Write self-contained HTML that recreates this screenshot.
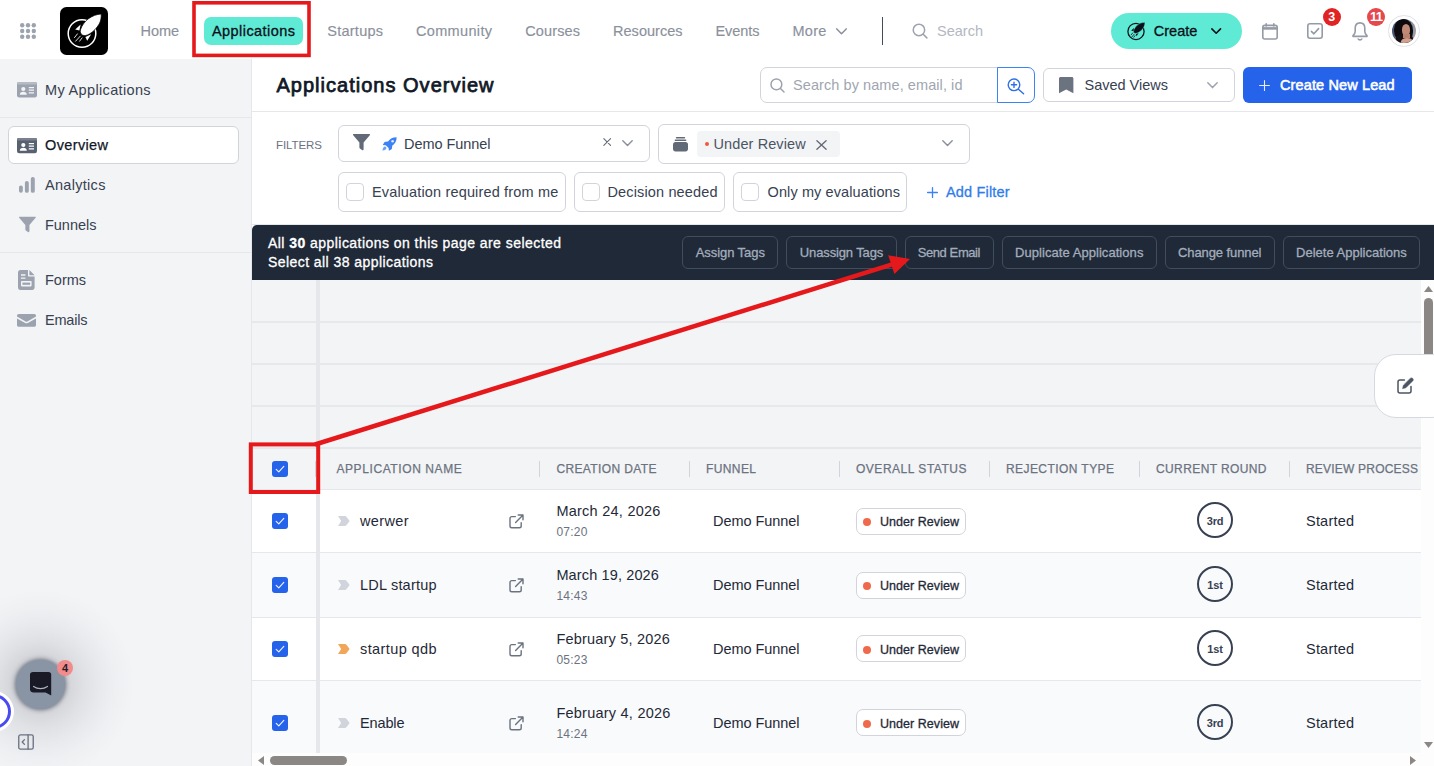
<!DOCTYPE html>
<html lang="en">
<head>
<meta charset="utf-8">
<title>Applications Overview</title>
<style>
*{box-sizing:border-box;margin:0;padding:0}
html,body{width:1434px;height:766px;overflow:hidden;background:#fff}
body{position:relative;font-family:"Liberation Sans",Arial,sans-serif;font-size:14px;color:#1f2937}
.a{position:absolute}
.t{position:absolute;white-space:nowrap;line-height:20px;height:20px}
svg{position:absolute;overflow:visible}
/* header */
#hdr{position:absolute;left:0;top:0;width:1434px;height:59px;background:#fff}
.nav{color:#8b919c;font-size:14.5px;-webkit-text-stroke:.15px #8b919c}
/* sidebar */
#side{position:absolute;left:0;top:59px;width:252px;height:707px;background:#f3f4f6;border-right:1px solid #e5e7eb}
.sb{color:#374151;font-size:14.5px}
/* main */
#main{position:absolute;left:252px;top:59px;width:1182px;height:707px;background:#fff}
.box{position:absolute;border:1px solid #d1d5db;border-radius:6px;background:#fff}
.cb{position:absolute;width:18px;height:18px;border:1px solid #d1d5db;border-radius:4px;background:#fff}
.ft{color:#374151;font-size:14.5px}
/* dark bar */
#bar{position:absolute;left:252px;top:225px;width:1182px;height:55px;background:#1f2937;border-top-left-radius:5px}
.bb{position:absolute;height:33px;border:1px solid #414c5c;border-radius:6px}
.bt{color:#a3adbc;font-size:13px;-webkit-text-stroke:.3px #a3adbc}
/* table */
#tbl{position:absolute;left:252px;top:280px;width:1169px;height:472px;background:#f3f4f6;overflow:hidden}
.hl{position:absolute;left:0;width:1169px;height:2px;background:#e8e9ed}
.th{color:#6b7280;font-size:12px;-webkit-text-stroke:.25px #6b7280}
.sep{position:absolute;top:181px;width:1px;height:16px;background:#d1d5db}
.row{position:absolute;left:0;width:1169px}
.ck{position:absolute;left:20px;width:16px;height:16px;border-radius:3px;background:#2563eb}
.nm{color:#1f2937;font-size:14.5px}
.tm{color:#6b7280;font-size:12px}
.st{position:absolute;left:604px;width:110px;height:27px;border:1px solid #d1d5db;border-radius:7px;background:#fff}
.dot{position:absolute;left:7px;top:9px;width:8px;height:8px;border-radius:50%;background:#ee6a4b}
.rd{position:absolute;left:945px;width:36px;height:36px;border:2px solid #374151;border-radius:50%}
</style>
</head>
<body>
<div id="hdr"></div>
<div id="side"></div>
<div id="main"></div>
<div id="bar"></div>
<div id="tbl"></div>
<svg style="left:20px;top:23px" width="16" height="16" viewBox="0 0 16 16" fill="#9ca3af"><rect x="0" y="0" width="4.4" height="4.4" rx="2.2"/><rect x="5.8" y="0" width="4.4" height="4.4" rx="2.2"/><rect x="11.6" y="0" width="4.4" height="4.4" rx="2.2"/><rect x="0" y="5.8" width="4.4" height="4.4" rx="2.2"/><rect x="5.8" y="5.8" width="4.4" height="4.4" rx="2.2"/><rect x="11.6" y="5.8" width="4.4" height="4.4" rx="2.2"/><rect x="0" y="11.6" width="4.4" height="4.4" rx="2.2"/><rect x="5.8" y="11.6" width="4.4" height="4.4" rx="2.2"/><rect x="11.6" y="11.6" width="4.4" height="4.4" rx="2.2"/></svg>
<div class="a" style="left:60px;top:7px;width:48px;height:48px;border-radius:6.5px;background:#000"></div>
<svg style="left:60px;top:7px" width="48" height="48" viewBox="0 0 48 48"><circle cx="22" cy="26.5" r="13.8" fill="none" stroke="#fff" stroke-width="1.5"/><path d="M41.2 7 C37 7.2 32.4 8.8 28 12 C24.6 14.8 21.8 18.6 20.5 22.7 C19.8 25.2 20.8 27.2 22.7 28.2 C24.4 29.1 26.8 28.4 29.4 27 C33 25 36.8 21.2 39.2 17 C40.8 14 41.4 10.6 41.2 7 Z" fill="#fff" stroke="#000" stroke-width=".7"/><path d="M15.2 22.4 L20.6 17.6 L19.4 23.6 Z" fill="#fff"/><path d="M25.4 30 L31.2 27.2 L27.2 33.8 Z" fill="#fff"/><path d="M17.4 26.9 L14.5 30.6 M20.3 29.1 L15.6 34.2 M22.1 30.9 L19.6 34.2" stroke="#fff" stroke-width="1" stroke-linecap="round" opacity=".85"/></svg>
<span class="t nav" style="letter-spacing:-0.062px;left:140.5px;top:21px">Home</span>
<div class="a" style="left:204px;top:17px;width:99px;height:28px;border-radius:7px;background:#5eead4"></div>
<span class="t" style="letter-spacing:0.438px;left:212px;top:21px;font-size:14.5px;color:#0b0f19;-webkit-text-stroke:.3px #0b0f19">Applications</span>
<span class="t nav" style="letter-spacing:0.243px;left:327.3px;top:21px">Startups</span>
<span class="t nav" style="letter-spacing:0.334px;left:416px;top:21px">Community</span>
<span class="t nav" style="letter-spacing:0.133px;left:525.2px;top:21px">Courses</span>
<span class="t nav" style="letter-spacing:0.036px;left:613px;top:21px">Resources</span>
<span class="t nav" style="letter-spacing:-0.049px;left:715.5px;top:21px">Events</span>
<span class="t nav" style="letter-spacing:0.284px;left:792.5px;top:21px">More</span>
<svg style="left:836px;top:27.5px" width="11" height="7" viewBox="0 0 11 7" fill="none" stroke="#8b919c" stroke-width="1.5" stroke-linecap="round" stroke-linejoin="round"><path d="M.8 .9 L5.5 5.7 L10.2 .9"/></svg>
<div class="a" style="left:882px;top:17px;width:1px;height:28px;background:#414c5d"></div>
<svg style="left:912px;top:23px" width="16.2" height="16.2" viewBox="0 0 17 17" fill="none" stroke="#9ca3af" stroke-width="1.6" stroke-linecap="round"><circle cx="7.3" cy="7.3" r="6"/><path d="M11.8 11.8 L15.6 15.6"/></svg>
<span class="t" style="letter-spacing:0.009px;left:937px;top:21px;font-size:14.5px;color:#b3b8c1">Search</span>
<!-- create -->
<div class="a" style="left:1111px;top:13px;width:131px;height:36px;border-radius:18px;background:#5eead4"></div>
<svg style="left:1126px;top:21px" width="20" height="20" viewBox="0 0 20 20"><circle cx="10" cy="10.4" r="8.1" fill="none" stroke="#0b0f19" stroke-width="1.25"/><path d="M19 1.3 C16 1.3 13 2.4 10.8 4.6 C9.2 6.2 7.9 8.2 7.5 10 C7.2 11.4 8.2 12.4 9.5 12.5 C11.2 12.4 13.6 11.2 15.5 9.3 C17.7 7.1 19 4.4 19 1.3 Z" fill="#0b0f19" stroke="#5eead4" stroke-width=".5"/><path d="M5.2 9.6 L8 7 L7.4 10.3 Z" fill="#0b0f19"/><path d="M9.8 13.3 L12.6 12 L10.6 15.2 Z" fill="#0b0f19"/><path d="M6.6 12 L5.2 13.8 M8 13.4 L5.8 16 M9 14.6 L7.8 16.2" stroke="#0b0f19" stroke-width=".8" stroke-linecap="round"/></svg>
<span class="t" style="letter-spacing:0.034px;left:1153.7px;top:21px;font-size:14.5px;color:#0b0f19;-webkit-text-stroke:.3px #0b0f19">Create</span>
<svg style="left:1211px;top:28px" width="10.4" height="6.6" viewBox="0 0 11 7" fill="none" stroke="#0b0f19" stroke-width="1.7" stroke-linecap="round" stroke-linejoin="round"><path d="M.9 .9 L5.5 5.6 L10.1 .9"/></svg>
<!-- calendar -->
<svg style="left:1262px;top:22.5px" width="16" height="17" viewBox="0 0 16 17" fill="none" stroke="#959ba6" stroke-width="1.6" stroke-linejoin="round"><rect x=".8" y="2.4" width="14.4" height="13.6" rx="2"/><path d="M.8 5.4 H15.2" stroke-width="2.6"/><path d="M4.2 .8 V3 M11.8 .8 V3" stroke-linecap="round"/></svg>
<!-- check square -->
<svg style="left:1307px;top:23px" width="16" height="16" viewBox="0 0 16 16" fill="none" stroke="#959ba6" stroke-width="1.6" stroke-linejoin="round" stroke-linecap="round"><rect x=".8" y=".8" width="14.4" height="14.4" rx="2.2"/><path d="M4.4 8.4 L6.9 10.8 L11.6 5.6"/></svg>
<div class="a" style="left:1322.5px;top:7.5px;width:18.5px;height:18.5px;border-radius:50%;background:#e02424"></div>
<span class="t" style="left:1322.5px;top:6.5px;width:18.5px;text-align:center;color:#fff;font-size:12.5px;font-weight:bold">3</span>
<!-- bell -->
<svg style="left:1352px;top:22px" width="16" height="19" viewBox="0 0 16 19" fill="none" stroke="#959ba6" stroke-width="1.6" stroke-linejoin="round" stroke-linecap="round"><path d="M8 .9 C4.8 .9 3.2 3.2 3.2 6.2 V9.4 C3.2 11.2 2.2 12.4 1 13.6 V14.4 H15 V13.6 C13.8 12.4 12.8 11.2 12.8 9.4 V6.2 C12.8 3.2 11.2 .9 8 .9 Z"/><path d="M6.2 17 C6.8 18.2 9.2 18.2 9.8 17"/></svg>
<div class="a" style="left:1367px;top:7.5px;width:18px;height:18.5px;border-radius:50%;background:#e5484d"></div>
<div class="a" style="left:1367px;top:7.5px;width:18px;height:13.3px;overflow:hidden"><span class="t" style="left:0;top:-.4px;width:18px;text-align:center;color:#fff;font-size:13px;font-weight:bold;letter-spacing:-.9px">11</span></div>
<!-- avatar -->
<div class="a" style="left:1388.3px;top:15.2px;width:31.4px;height:31.4px;border-radius:50%;background:#fff;border:1px solid #e0e2e6"></div>
<div class="a" style="left:1391.8px;top:18.7px;width:24.4px;height:24.4px;border-radius:50%;overflow:hidden;background:linear-gradient(100deg,#3f4f6e 0%,#56627c 30%,#8b8f99 75%,#a9abb0 100%)">
<div class="a" style="left:2.5px;top:0;width:19px;height:23px;border-radius:46% 50% 44% 50%;background:#0d0b0d"></div>
<div class="a" style="left:4px;top:15px;width:17px;height:11px;border-radius:40%;background:#141013"></div>
<div class="a" style="left:10px;top:5.5px;width:8.4px;height:11.4px;border-radius:48%;background:#c08a76"></div>
<div class="a" style="left:11.5px;top:15.5px;width:6.5px;height:4px;background:#b98370"></div>
<div class="a" style="left:9px;top:19px;width:12px;height:7px;border-radius:50% 50% 0 0;background:#d2a08c"></div>
</div>

<!-- sidebar: page coords -->
<svg style="left:17px;top:82px" width="20" height="16" viewBox="0 0 20 16"><rect x="0" y="0" width="20" height="15.4" rx="2.2" fill="#9ca3af"/><rect x="0" y="0" width="20" height="2.6" rx="1.3" fill="#b6bbc4"/><circle cx="6.3" cy="7" r="2.1" fill="#f3f4f6"/><path d="M2.8 12.8 C2.8 10.4 4.4 9.7 6.3 9.7 C8.2 9.7 9.8 10.4 9.8 12.8 Z" fill="#f3f4f6"/><path d="M11.8 5.6 H17 M11.8 8.2 H17 M11.8 10.8 H17" stroke="#f3f4f6" stroke-width="1.2"/></svg>
<span class="t sb" style="letter-spacing:0.346px;left:45px;top:80px">My Applications</span>
<div class="a" style="left:0;top:117px;width:251px;height:1px;background:#e5e7eb"></div>
<div class="box" style="left:8px;top:126px;width:231px;height:38px"></div>
<svg style="left:17px;top:137.5px" width="20" height="16" viewBox="0 0 20 16"><rect x="0" y="0" width="20" height="15.2" rx="2.2" fill="#596170"/><rect x="0" y="0" width="20" height="2.4" rx="1.2" fill="#7a818e"/><circle cx="6.3" cy="7" r="2.1" fill="#fff"/><path d="M2.8 12.8 C2.8 10.4 4.4 9.7 6.3 9.7 C8.2 9.7 9.8 10.4 9.8 12.8 Z" fill="#fff"/><path d="M11.8 5.6 H17 M11.8 8.2 H17 M11.8 10.8 H17" stroke="#fff" stroke-width="1.2"/></svg>
<span class="t" style="letter-spacing:0.366px;left:45px;top:135px;font-size:14.5px;color:#111827;-webkit-text-stroke:.25px #111827">Overview</span>
<svg style="left:19px;top:177px" width="16" height="16" viewBox="0 0 16 16" fill="#9ca3af"><rect x="0" y="8.4" width="3.8" height="7.4" rx="1.8"/><rect x="5.9" y="4" width="3.9" height="11.8" rx="1.9"/><rect x="11.8" y="0" width="4" height="15.8" rx="1.9"/></svg>
<span class="t sb" style="letter-spacing:0.296px;left:45px;top:175px">Analytics</span>
<svg style="left:18.6px;top:216.4px" width="16.8" height="17.8" viewBox="0 0 18 18" fill="#9ca3af"><path d="M.6 .2 H17.4 C18 .2 18.2 .9 17.8 1.4 L11.2 9 V15.6 C11.2 16.6 10.4 17.2 9.6 16.6 L7.4 15 C7 14.7 6.8 14.3 6.8 13.8 V9 L.2 1.4 C-.2 .9 0 .2 .6 .2 Z"/></svg>
<span class="t sb" style="letter-spacing:-0.032px;left:45px;top:215px">Funnels</span>
<div class="a" style="left:0;top:252px;width:251px;height:1px;background:#e5e7eb"></div>
<svg style="left:18.4px;top:270px" width="17" height="20" viewBox="0 0 17 20"><path d="M2.4 0 H10 V5.4 C10 6 10.4 6.4 11 6.4 H16.6 V17.6 C16.6 18.9 15.6 20 14.2 20 H2.4 C1 20 0 18.9 0 17.6 V2.4 C0 1 1 0 2.4 0 Z" fill="#9ca3af"/><path d="M11.4 0 L16.6 5.2 H11.4 Z" fill="#9ca3af"/><path d="M3 5 H7.4 M3 8.2 H7.4" stroke="#f3f4f6" stroke-width="1.3"/><rect x="3" y="11" width="10.6" height="5.4" rx=".8" fill="#f3f4f6"/><rect x="4.4" y="12.6" width="7.8" height="2.2" fill="#9ca3af"/></svg>
<span class="t sb" style="letter-spacing:-0.023px;left:45px;top:270px">Forms</span>
<svg style="left:17.4px;top:314px" width="19" height="13" viewBox="0 0 19 13" fill="#9ca3af"><path d="M1.8 0 H17.2 C18.2 0 19 .8 19 1.8 V2.6 L10.4 7.4 C9.8 7.7 9.2 7.7 8.6 7.4 L0 2.6 V1.8 C0 .8 .8 0 1.8 0 Z"/><path d="M0 4.4 L8.2 9 C9 9.4 10 9.4 10.8 9 L19 4.4 V11 C19 12 18.2 12.8 17.2 12.8 H1.8 C.8 12.8 0 12 0 11 Z"/></svg>
<span class="t sb" style="letter-spacing:-0.223px;left:45px;top:310px">Emails</span>
<!-- chat widget -->
<div class="a" style="left:-55px;top:589px;width:190px;height:190px;border-radius:50%;background:radial-gradient(circle closest-side,rgba(95,100,112,.5) 0%,rgba(100,105,118,.3) 26%,rgba(110,115,128,.22) 33%,rgba(120,125,138,.16) 46%,rgba(130,135,148,.1) 62%,rgba(140,145,158,.045) 80%,rgba(243,244,246,0) 100%)"></div>
<div class="a" style="left:15.5px;top:659.5px;width:49.5px;height:49.5px;border-radius:50%;background:#8995a4;box-shadow:0 0 3.5px 1.5px rgba(88,94,106,.6)"></div>
<svg style="left:29.5px;top:672px" width="22" height="24" viewBox="0 0 22 24"><path d="M3 0 H18.6 C20.2 0 21.2 1 21.2 2.6 V23.4 L15.6 20.4 H3 C1.2 20.4 0 19.2 0 17.6 V2.6 C0 1 1.2 0 3 0 Z" fill="#1a1a27"/><path d="M3.6 14.4 C7.6 17.4 13.4 17.4 17.4 14.4" fill="none" stroke="#aab3bf" stroke-width="1.2" stroke-linecap="round"/></svg>
<div class="a" style="left:57px;top:660px;width:16px;height:16px;border-radius:50%;background:#f28b8b"></div>
<span class="t" style="left:57px;top:657.6px;width:16px;text-align:center;color:#1f1f2b;font-size:11px;font-weight:bold">4</span>
<div class="a" style="left:-27.2px;top:690.9px;width:41.2px;height:41.2px;border-radius:50%;background:#fff"></div>
<div class="a" style="left:-24px;top:694px;width:35px;height:35px;border-radius:50%;border:3.6px solid #4a4af2;background:#fff"></div>
<svg style="left:18.2px;top:734.2px" width="16.2" height="16.4" viewBox="0 0 17 17" fill="none" stroke="#6b7280" stroke-width="1.4" stroke-linejoin="round" stroke-linecap="round"><rect x=".8" y=".8" width="15.2" height="15" rx="1.8"/><path d="M10.6 .8 V15.8"/><path d="M6.8 5.8 L4.4 8.3 L6.8 10.8"/></svg>

<!-- main: page coords -->
<span class="t" style="letter-spacing:1.012px;left:276.5px;top:71px;height:28px;line-height:28px;font-size:20px;color:#111827;-webkit-text-stroke:.75px #111827">Applications Overview</span>
<div class="a" style="left:252px;top:111px;width:1182px;height:1px;background:#e5e7eb"></div>
<!-- search -->
<div class="box" style="left:760px;top:67px;width:238px;height:36px;border-radius:7px 0 0 7px"></div>
<svg style="left:770px;top:77.5px" width="15" height="15" viewBox="0 0 15 15" fill="none" stroke="#9ca3af" stroke-width="1.5" stroke-linecap="round"><circle cx="6.4" cy="6.4" r="5.4"/><path d="M10.5 10.5 L14 14"/></svg>
<span class="t" style="letter-spacing:0.077px;left:793px;top:75px;font-size:14.5px;color:#a0a6b1">Search by name, email, id</span>
<div class="a" style="left:996.5px;top:67px;width:38.5px;height:36px;border:1.5px solid #3b82f6;border-radius:0 7px 7px 0;background:#fff"></div>
<svg style="left:1007px;top:77.5px" width="18" height="17" viewBox="0 0 18 17" fill="none" stroke="#2f6fe8" stroke-width="1.4" stroke-linecap="round"><circle cx="7" cy="6.8" r="5.8"/><path d="M11.4 11.2 L16.6 15.8"/><path d="M7 4.2 V9.4 M4.4 6.8 H9.6" stroke-width="1.4"/></svg>
<!-- saved views -->
<div class="box" style="left:1043px;top:68px;width:192px;height:34px"></div>
<svg style="left:1058.8px;top:77px" width="14.4" height="16.2" viewBox="0 0 14.4 16.2"><path d="M1.6 0 H12.8 C13.7 0 14.4 .7 14.4 1.6 V16.2 L7.2 12.6 L0 16.2 V1.6 C0 .7 .7 0 1.6 0 Z" fill="#6b7280"/></svg>
<span class="t" style="letter-spacing:-0.006px;left:1084.5px;top:75px;font-size:14.5px;color:#374151">Saved Views</span>
<svg style="left:1206.5px;top:82px" width="11" height="7" viewBox="0 0 11 7" fill="none" stroke="#9ca3af" stroke-width="1.5" stroke-linecap="round" stroke-linejoin="round"><path d="M.8 .8 L5.5 5.6 L10.2 .8"/></svg>
<!-- create new lead -->
<div class="a" style="left:1243px;top:67px;width:169px;height:36px;border-radius:6px;background:#2563eb"></div>
<svg style="left:1258.5px;top:79.5px" width="11" height="11" viewBox="0 0 11 11" stroke="#e6edff" stroke-width="1.1" stroke-linecap="round"><path d="M5.5 .6 V10.4 M.6 5.5 H10.4"/></svg>
<span class="t" style="letter-spacing:0.125px;left:1280px;top:75px;font-size:14.5px;color:#fff;-webkit-text-stroke:.55px #fff">Create New Lead</span>
<div class="a" style="left:252px;top:223.5px;width:1182px;height:1px;background:#e5e7eb"></div>
<!-- filters row 1 -->
<span class="t" style="letter-spacing:-0.073px;left:276px;top:135px;font-size:11.5px;color:#6b7280">FILTERS</span>
<div class="box" style="left:338px;top:125px;width:312px;height:37px"></div>
<svg style="left:352.5px;top:134px" width="17" height="18" viewBox="0 0 17 18" fill="#636a77"><path d="M.6 0 H16.4 C17 0 17.2 .7 16.8 1.2 L10.6 8.6 V15 C10.6 16 9.8 16.6 9 16 L6.9 14.4 C6.5 14.1 6.4 13.7 6.4 13.2 V8.6 L.2 1.2 C-.2 .7 0 0 .6 0 Z"/></svg>
<svg style="left:382px;top:137px" width="15" height="14" viewBox="0 0 15 14"><path d="M14.6 .3 C11 .2 8 1.6 6 4.6 L3.4 4.8 C2.8 4.9 2.4 5.2 2.1 5.7 L.8 8 L3.8 8.2 L6.6 11 L6.9 13.8 L9.1 12.6 C9.6 12.3 9.9 11.9 10 11.3 L10.2 8.8 C13.2 6.8 14.8 3.8 14.6 .3 Z" fill="#3b82f6"/><circle cx="10.6" cy="4.2" r="1.3" fill="#dbeafe"/><path d="M3.2 9.4 C1.6 9.6 .6 11 .4 13.6 C3 13.4 4.4 12.4 4.6 10.8 Z" fill="#60a5fa"/></svg>
<span class="t ft" style="letter-spacing:-0.065px;left:404px;top:133.5px">Demo Funnel</span>
<svg style="left:602.5px;top:137.9px" width="8.4" height="8" viewBox="0 0 9 9" stroke="#636a77" stroke-width="1.2" stroke-linecap="round"><path d="M.7 .7 L8.3 8.3 M8.3 .7 L.7 8.3"/></svg>
<svg style="left:621.5px;top:140px" width="11" height="7" viewBox="0 0 11 7" fill="none" stroke="#8a909b" stroke-width="1.4" stroke-linecap="round" stroke-linejoin="round"><path d="M.8 .8 L5.5 5.6 L10.2 .8"/></svg>
<div class="box" style="left:658px;top:124px;width:312px;height:39.5px"></div>
<svg style="left:672.5px;top:136.5px" width="15" height="14.5" viewBox="0 0 15 14.5" fill="#636a77"><rect x="2.8" y="0" width="9.4" height="1.4" rx=".7"/><rect x="1.6" y="2.4" width="11.8" height="1.6" rx=".8"/><path d="M2.4 5 H12.6 C14 5 15 6 15 7.4 V12 C15 13.4 14 14.4 12.6 14.4 H2.4 C1 14.4 0 13.4 0 12 V7.4 C0 6 1 5 2.4 5 Z"/></svg>
<div class="a" style="left:697px;top:131px;width:143px;height:26px;border-radius:4px;background:#f3f4f6"></div>
<div class="a" style="left:704.6px;top:142px;width:4px;height:4px;border-radius:50%;background:#ee5a3a"></div>
<span class="t" style="letter-spacing:0.102px;left:713.5px;top:134px;font-size:14.5px;color:#4b5563">Under Review</span>
<svg style="left:815.5px;top:139.5px" width="11" height="10" viewBox="0 0 11 10" stroke="#636a77" stroke-width="1.35" stroke-linecap="round"><path d="M.9 .8 L10.1 9.2 M10.1 .8 L.9 9.2"/></svg>
<svg style="left:942px;top:140px" width="11" height="7" viewBox="0 0 11 7" fill="none" stroke="#8a909b" stroke-width="1.4" stroke-linecap="round" stroke-linejoin="round"><path d="M.8 .8 L5.5 5.6 L10.2 .8"/></svg>
<!-- filters row 2 -->
<div class="box" style="left:338px;top:172px;width:228px;height:40px"></div>
<div class="cb" style="left:346px;top:183px"></div>
<span class="t ft" style="letter-spacing:0.156px;left:372px;top:182px">Evaluation required from me</span>
<div class="box" style="left:574px;top:172px;width:151px;height:40px"></div>
<div class="cb" style="left:582px;top:183px"></div>
<span class="t ft" style="letter-spacing:0.141px;left:607.5px;top:182px">Decision needed</span>
<div class="box" style="left:733px;top:172px;width:174px;height:40px"></div>
<div class="cb" style="left:741px;top:183px"></div>
<span class="t ft" style="letter-spacing:0.108px;left:767.5px;top:182px">Only my evaluations</span>
<svg style="left:926.5px;top:186.5px" width="11" height="11" viewBox="0 0 11 11" stroke="#3b82f6" stroke-width="1.3" stroke-linecap="round"><path d="M5.5 .6 V10.4 M.6 5.5 H10.4"/></svg>
<span class="t" style="letter-spacing:0.171px;left:946px;top:182px;font-size:14.5px;color:#2f7de9;-webkit-text-stroke:.3px #2f7de9">Add Filter</span>

<span class="t" style="letter-spacing:0.450px;left:268px;top:233px;font-size:14px;color:#fff;-webkit-text-stroke:.3px #fff">All <b>30</b> applications on this page are selected</span>
<span class="t" style="letter-spacing:0.436px;left:268px;top:252px;font-size:14px;color:#fff;-webkit-text-stroke:.3px #fff">Select all 38 applications</span>
<div class="bb" style="left:682.0px;top:236px;width:95.8px"></div>
<span class="t bt" style="letter-spacing:-0.066px;left:695.7px;top:242.5px">Assign Tags</span>
<div class="bb" style="left:786.0px;top:236px;width:111.0px"></div>
<span class="t bt" style="letter-spacing:-0.129px;left:799.8px;top:242.5px">Unassign Tags</span>
<div class="bb" style="left:905.0px;top:236px;width:88.8px"></div>
<span class="t bt" style="letter-spacing:-0.409px;left:917.7px;top:242.5px">Send Email</span>
<div class="bb" style="left:1002.2px;top:236px;width:154.4px"></div>
<span class="t bt" style="letter-spacing:0.057px;left:1015.0px;top:242.5px">Duplicate Applications</span>
<div class="bb" style="left:1165.0px;top:236px;width:109.8px"></div>
<span class="t bt" style="letter-spacing:-0.090px;left:1178.0px;top:242.5px">Change funnel</span>
<div class="bb" style="left:1283.3px;top:236px;width:136.4px"></div>
<span class="t bt" style="letter-spacing:0.012px;left:1296.0px;top:242.5px">Delete Applications</span>

<div class="a" style="left:252px;top:321px;width:1169px;height:2px;background:#e7e8ec"></div>
<div class="a" style="left:252px;top:363px;width:1169px;height:2px;background:#e7e8ec"></div>
<div class="a" style="left:252px;top:405px;width:1169px;height:2px;background:#e7e8ec"></div>
<div class="a" style="left:252px;top:447px;width:1169px;height:2px;background:#e5e7eb"></div>
<div class="a" style="left:252px;top:490px;width:1169px;height:62px;background:#fff"></div>
<div class="a" style="left:252px;top:553px;width:1169px;height:64px;background:#f9fafb"></div>
<div class="a" style="left:252px;top:618px;width:1169px;height:62px;background:#fff"></div>
<div class="a" style="left:252px;top:681px;width:1169px;height:72px;background:#f9fafb"></div>
<div class="a" style="left:252px;top:489px;width:1169px;height:1px;background:#e5e7eb"></div>
<div class="a" style="left:252px;top:552px;width:1169px;height:1px;background:#e5e7eb"></div>
<div class="a" style="left:252px;top:617px;width:1169px;height:1px;background:#e5e7eb"></div>
<div class="a" style="left:252px;top:680px;width:1169px;height:1px;background:#e5e7eb"></div>
<div class="a" style="left:316px;top:280px;width:3.7px;height:473px;background:#e5e7eb"></div>
<div class="a" style="left:315px;top:461px;width:1px;height:16px;background:#d1d5db"></div>
<span class="t th" style="letter-spacing:0.595px;left:336.4px;top:459px">APPLICATION NAME</span>
<span class="t th" style="letter-spacing:0.378px;left:556.4px;top:459px">CREATION DATE</span>
<span class="t th" style="letter-spacing:0.397px;left:706.0px;top:459px">FUNNEL</span>
<span class="t th" style="letter-spacing:0.514px;left:856.0px;top:459px">OVERALL STATUS</span>
<span class="t th" style="letter-spacing:0.425px;left:1006.0px;top:459px">REJECTION TYPE</span>
<span class="t th" style="letter-spacing:0.393px;left:1156.0px;top:459px">CURRENT ROUND</span>
<span class="t th" style="letter-spacing:0.203px;left:1306.0px;top:459px">REVIEW PROCESS</span>
<div class="a" style="left:539px;top:461px;width:1px;height:16px;background:#d1d5db"></div>
<div class="a" style="left:689px;top:461px;width:1px;height:16px;background:#d1d5db"></div>
<div class="a" style="left:839px;top:461px;width:1px;height:16px;background:#d1d5db"></div>
<div class="a" style="left:989px;top:461px;width:1px;height:16px;background:#d1d5db"></div>
<div class="a" style="left:1139px;top:461px;width:1px;height:16px;background:#d1d5db"></div>
<div class="a" style="left:1289px;top:461px;width:1px;height:16px;background:#d1d5db"></div>
<svg style="left:272px;top:461.0px" width="16" height="16" viewBox="0 0 16 16"><rect width="16" height="16" rx="3" fill="#2563eb"/><path d="M4.2 8.3 L6.8 10.9 L11.8 5.4" fill="none" stroke="#fff" stroke-width="1.15" stroke-linecap="round" stroke-linejoin="round" opacity=".92"/></svg>
<svg style="left:272px;top:513.0px" width="16" height="16" viewBox="0 0 16 16"><rect width="16" height="16" rx="3" fill="#2563eb"/><path d="M4.2 8.3 L6.8 10.9 L11.8 5.4" fill="none" stroke="#fff" stroke-width="1.15" stroke-linecap="round" stroke-linejoin="round" opacity=".92"/></svg>
<svg style="left:338px;top:516.0px" width="11.5" height="10" viewBox="0 0 11.5 10"><path d="M0 0 H7 C7.6 0 8 .2 8.4 .7 L11.3 4.4 C11.6 4.8 11.6 5.2 11.3 5.6 L8.4 9.3 C8 9.8 7.6 10 7 10 H0 L3.2 5 Z" fill="#d1d5db"/></svg>
<span class="t nm" style="letter-spacing:0.353px;left:360px;top:511px">werwer</span>
<svg style="left:508.5px;top:514.0px" width="15" height="15" viewBox="0 0 15 15" fill="none" stroke="#6b7280" stroke-width="1.4" stroke-linecap="round" stroke-linejoin="round"><path d="M6.4 2.6 H2.8 C1.8 2.6 1 3.4 1 4.4 V12 C1 13 1.8 13.8 2.8 13.8 H10.4 C11.4 13.8 12.2 13 12.2 12 V8.6"/><path d="M9.2 1 H14 V5.8 M14 1 L6.6 8.4"/></svg>
<span class="t nm" style="letter-spacing:0.249px;left:556.4px;top:501.0px">March 24, 2026</span>
<span class="t tm" style="letter-spacing:0.242px;left:556.4px;top:521.5px">07:20</span>
<span class="t nm" style="letter-spacing:-0.055px;left:713px;top:511px">Demo Funnel</span>
<div class="a" style="left:856px;top:507.5px;width:110px;height:27px;border:1px solid #d1d5db;border-radius:7px;background:#fff"></div>
<div class="a" style="left:863px;top:517.5px;width:8px;height:8px;border-radius:50%;background:#ee6a4b"></div>
<span class="t" style="letter-spacing:0.044px;left:880px;top:511.5px;font-size:12.5px;color:#1f2937;-webkit-text-stroke:.3px #1f2937">Under Review</span>
<div class="a" style="left:1197px;top:502px;width:36px;height:36px;border:2px solid #374151;border-radius:50%"></div>
<span class="t" style="left:1197px;top:510.5px;width:36px;text-align:center;font-size:11px;font-weight:bold;color:#374151;letter-spacing:-.2px">3rd</span>
<span class="t nm" style="letter-spacing:0.208px;left:1306px;top:511px">Started</span>
<svg style="left:272px;top:577.0px" width="16" height="16" viewBox="0 0 16 16"><rect width="16" height="16" rx="3" fill="#2563eb"/><path d="M4.2 8.3 L6.8 10.9 L11.8 5.4" fill="none" stroke="#fff" stroke-width="1.15" stroke-linecap="round" stroke-linejoin="round" opacity=".92"/></svg>
<svg style="left:338px;top:580.0px" width="11.5" height="10" viewBox="0 0 11.5 10"><path d="M0 0 H7 C7.6 0 8 .2 8.4 .7 L11.3 4.4 C11.6 4.8 11.6 5.2 11.3 5.6 L8.4 9.3 C8 9.8 7.6 10 7 10 H0 L3.2 5 Z" fill="#d1d5db"/></svg>
<span class="t nm" style="letter-spacing:0.208px;left:360px;top:575px">LDL startup</span>
<svg style="left:508.5px;top:578.0px" width="15" height="15" viewBox="0 0 15 15" fill="none" stroke="#6b7280" stroke-width="1.4" stroke-linecap="round" stroke-linejoin="round"><path d="M6.4 2.6 H2.8 C1.8 2.6 1 3.4 1 4.4 V12 C1 13 1.8 13.8 2.8 13.8 H10.4 C11.4 13.8 12.2 13 12.2 12 V8.6"/><path d="M9.2 1 H14 V5.8 M14 1 L6.6 8.4"/></svg>
<span class="t nm" style="letter-spacing:0.133px;left:556.4px;top:565.0px">March 19, 2026</span>
<span class="t tm" style="letter-spacing:0.242px;left:556.4px;top:585.5px">14:43</span>
<span class="t nm" style="letter-spacing:-0.055px;left:713px;top:575px">Demo Funnel</span>
<div class="a" style="left:856px;top:571.5px;width:110px;height:27px;border:1px solid #d1d5db;border-radius:7px;background:#fff"></div>
<div class="a" style="left:863px;top:581.5px;width:8px;height:8px;border-radius:50%;background:#ee6a4b"></div>
<span class="t" style="letter-spacing:0.044px;left:880px;top:575.5px;font-size:12.5px;color:#1f2937;-webkit-text-stroke:.3px #1f2937">Under Review</span>
<div class="a" style="left:1197px;top:566px;width:36px;height:36px;border:2px solid #374151;border-radius:50%"></div>
<span class="t" style="left:1197px;top:574.5px;width:36px;text-align:center;font-size:11px;font-weight:bold;color:#374151;letter-spacing:-.2px">1st</span>
<span class="t nm" style="letter-spacing:0.208px;left:1306px;top:575px">Started</span>
<svg style="left:272px;top:641.0px" width="16" height="16" viewBox="0 0 16 16"><rect width="16" height="16" rx="3" fill="#2563eb"/><path d="M4.2 8.3 L6.8 10.9 L11.8 5.4" fill="none" stroke="#fff" stroke-width="1.15" stroke-linecap="round" stroke-linejoin="round" opacity=".92"/></svg>
<svg style="left:338px;top:644.0px" width="11.5" height="10" viewBox="0 0 11.5 10"><path d="M0 0 H7 C7.6 0 8 .2 8.4 .7 L11.3 4.4 C11.6 4.8 11.6 5.2 11.3 5.6 L8.4 9.3 C8 9.8 7.6 10 7 10 H0 L3.2 5 Z" fill="#f2a65a"/></svg>
<span class="t nm" style="letter-spacing:0.394px;left:360px;top:639px">startup qdb</span>
<svg style="left:508.5px;top:642.0px" width="15" height="15" viewBox="0 0 15 15" fill="none" stroke="#6b7280" stroke-width="1.4" stroke-linecap="round" stroke-linejoin="round"><path d="M6.4 2.6 H2.8 C1.8 2.6 1 3.4 1 4.4 V12 C1 13 1.8 13.8 2.8 13.8 H10.4 C11.4 13.8 12.2 13 12.2 12 V8.6"/><path d="M9.2 1 H14 V5.8 M14 1 L6.6 8.4"/></svg>
<span class="t nm" style="letter-spacing:0.204px;left:556.4px;top:629.0px">February 5, 2026</span>
<span class="t tm" style="letter-spacing:0.242px;left:556.4px;top:649.5px">05:23</span>
<span class="t nm" style="letter-spacing:-0.055px;left:713px;top:639px">Demo Funnel</span>
<div class="a" style="left:856px;top:634.7px;width:110px;height:27px;border:1px solid #d1d5db;border-radius:7px;background:#fff"></div>
<div class="a" style="left:863px;top:645.5px;width:8px;height:8px;border-radius:50%;background:#ee6a4b"></div>
<span class="t" style="letter-spacing:0.044px;left:880px;top:639.5px;font-size:12.5px;color:#1f2937;-webkit-text-stroke:.3px #1f2937">Under Review</span>
<div class="a" style="left:1197px;top:630px;width:36px;height:36px;border:2px solid #374151;border-radius:50%"></div>
<span class="t" style="left:1197px;top:638.5px;width:36px;text-align:center;font-size:11px;font-weight:bold;color:#374151;letter-spacing:-.2px">1st</span>
<span class="t nm" style="letter-spacing:0.208px;left:1306px;top:639px">Started</span>
<svg style="left:272px;top:715.0px" width="16" height="16" viewBox="0 0 16 16"><rect width="16" height="16" rx="3" fill="#2563eb"/><path d="M4.2 8.3 L6.8 10.9 L11.8 5.4" fill="none" stroke="#fff" stroke-width="1.15" stroke-linecap="round" stroke-linejoin="round" opacity=".92"/></svg>
<svg style="left:338px;top:718.0px" width="11.5" height="10" viewBox="0 0 11.5 10"><path d="M0 0 H7 C7.6 0 8 .2 8.4 .7 L11.3 4.4 C11.6 4.8 11.6 5.2 11.3 5.6 L8.4 9.3 C8 9.8 7.6 10 7 10 H0 L3.2 5 Z" fill="#d1d5db"/></svg>
<span class="t nm" style="letter-spacing:-0.131px;left:360px;top:713px">Enable</span>
<svg style="left:508.5px;top:716.0px" width="15" height="15" viewBox="0 0 15 15" fill="none" stroke="#6b7280" stroke-width="1.4" stroke-linecap="round" stroke-linejoin="round"><path d="M6.4 2.6 H2.8 C1.8 2.6 1 3.4 1 4.4 V12 C1 13 1.8 13.8 2.8 13.8 H10.4 C11.4 13.8 12.2 13 12.2 12 V8.6"/><path d="M9.2 1 H14 V5.8 M14 1 L6.6 8.4"/></svg>
<span class="t nm" style="letter-spacing:0.237px;left:556.4px;top:703.0px">February 4, 2026</span>
<span class="t tm" style="letter-spacing:0.242px;left:556.4px;top:723.5px">14:24</span>
<span class="t nm" style="letter-spacing:-0.055px;left:713px;top:713px">Demo Funnel</span>
<div class="a" style="left:856px;top:708.7px;width:110px;height:27px;border:1px solid #d1d5db;border-radius:7px;background:#fff"></div>
<div class="a" style="left:863px;top:719.5px;width:8px;height:8px;border-radius:50%;background:#ee6a4b"></div>
<span class="t" style="letter-spacing:0.044px;left:880px;top:713.5px;font-size:12.5px;color:#1f2937;-webkit-text-stroke:.3px #1f2937">Under Review</span>
<div class="a" style="left:1197px;top:704px;width:36px;height:36px;border:2px solid #374151;border-radius:50%"></div>
<span class="t" style="left:1197px;top:712.5px;width:36px;text-align:center;font-size:11px;font-weight:bold;color:#374151;letter-spacing:-.2px">3rd</span>
<span class="t nm" style="letter-spacing:0.208px;left:1306px;top:713px">Started</span>

<!-- scrollbars -->
<div class="a" style="left:1421px;top:280px;width:13px;height:486px;background:#fdfdfd"></div>
<div class="a" style="left:252px;top:753px;width:1182px;height:13px;background:#fdfdfd"></div>
<svg style="left:1423.5px;top:285.5px" width="9" height="6" viewBox="0 0 9 6"><path d="M4.5 0 L9 6 H0 Z" fill="#8b8785"/></svg>
<div class="a" style="left:1424px;top:298px;width:8.5px;height:70px;border-radius:4.5px;background:#8b8785"></div>
<svg style="left:1423.5px;top:742px" width="9" height="6" viewBox="0 0 9 6"><path d="M0 0 H9 L4.5 6 Z" fill="#8b8785"/></svg>
<svg style="left:257.5px;top:755.5px" width="6" height="9" viewBox="0 0 6 9"><path d="M0 4.5 L6 0 V9 Z" fill="#8b8785"/></svg>
<div class="a" style="left:270px;top:755.5px;width:77px;height:9px;border-radius:4.5px;background:#8b8785"></div>
<svg style="left:1409.5px;top:755.5px" width="6" height="9" viewBox="0 0 6 9"><path d="M6 4.5 L0 0 V9 Z" fill="#8b8785"/></svg>

<div class="a" style="left:1374px;top:354px;width:80px;height:63.5px;border:1px solid #d6dae0;border-radius:22px;background:#fff"></div>
<svg style="left:1397px;top:377px" width="17" height="17" viewBox="0 0 17 17" fill="none" stroke="#4b5563" stroke-width="1.5" stroke-linecap="round" stroke-linejoin="round"><path d="M7.4 3 H3 C1.9 3 1 3.9 1 5 V14 C1 15.1 1.9 16 3 16 H12 C13.1 16 14 15.1 14 14 V9.6"/><path d="M13.2 1.4 C13.9 .7 15 .7 15.7 1.4 C16.4 2.1 16.4 3.2 15.7 3.9 L8.8 10.8 L5.6 11.6 L6.4 8.4 Z" fill="#4b5563" stroke-width=".6"/></svg>

<svg style="left:0;top:0" width="1434" height="766" viewBox="0 0 1434 766"><rect x="194" y="2.8" width="115" height="52.6" fill="none" stroke="#e5191c" stroke-width="3.6"/><rect x="250.8" y="444.4" width="67.4" height="47.6" fill="none" stroke="#e5191c" stroke-width="4"/><path d="M315 444.5 L893 264.2" stroke="#e5191c" stroke-width="4.5" fill="none"/><path d="M910 259.1 L888.2 255.3 L894.4 274 Z" fill="#e5191c"/></svg>

</body>
</html>
